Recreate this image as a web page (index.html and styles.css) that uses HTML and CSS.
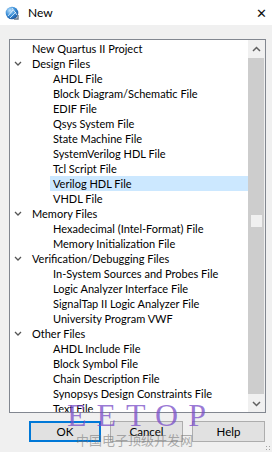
FILE: index.html
```html
<!DOCTYPE html>
<html lang="en">

<head>
    <meta charset="UTF-8">
    <meta name="viewport" content="width=device-width, initial-scale=1.0">
    <title>New</title>
    <link rel="stylesheet" href="styles.css">
</head>

<body>
    <div class="window">
        <div class="titlebar">
            <svg class="app-icon" width="14" height="14" viewBox="0 0 14 14">
                <defs>
                    <radialGradient id="globe" cx="0.35" cy="0.3" r="0.8">
                        <stop offset="0" stop-color="#bfe3ff"/>
                        <stop offset="0.5" stop-color="#3a8fd8"/>
                        <stop offset="1" stop-color="#1d4f94"/>
                    </radialGradient>
                </defs>
                <circle cx="7" cy="7" r="6.3" fill="url(#globe)"/>
                <path d="M3 10 L8 4 M5 12 L11 6 M7 2 L12 9" stroke="#ffffff" stroke-width="0.9" fill="none" opacity="0.8"/>
                <path d="M9 13 L13 13 L13 9" stroke="#6a7a8a" stroke-width="1.4" fill="none"/>
            </svg>
            <span class="title">New</span>
            <span class="close">&#x2715;</span>
        </div>

        <div class="content">
            <div class="listbox">
                <ul class="tree">
                    <li class="row">New Quartus II Project</li>
                    <li class="row group"><span class="chev"></span>Design Files</li>
                    <li class="row child">AHDL File</li>
                    <li class="row child">Block Diagram/Schematic File</li>
                    <li class="row child">EDIF File</li>
                    <li class="row child">Qsys System File</li>
                    <li class="row child">State Machine File</li>
                    <li class="row child">SystemVerilog HDL File</li>
                    <li class="row child">Tcl Script File</li>
                    <li class="row child selected"><span>Verilog HDL File</span></li>
                    <li class="row child">VHDL File</li>
                    <li class="row group"><span class="chev"></span>Memory Files</li>
                    <li class="row child">Hexadecimal (Intel-Format) File</li>
                    <li class="row child">Memory Initialization File</li>
                    <li class="row group"><span class="chev"></span>Verification/Debugging Files</li>
                    <li class="row child">In-System Sources and Probes File</li>
                    <li class="row child">Logic Analyzer Interface File</li>
                    <li class="row child">SignalTap II Logic Analyzer File</li>
                    <li class="row child">University Program VWF</li>
                    <li class="row group"><span class="chev"></span>Other Files</li>
                    <li class="row child">AHDL Include File</li>
                    <li class="row child">Block Symbol File</li>
                    <li class="row child">Chain Description File</li>
                    <li class="row child">Synopsys Design Constraints File</li>
                    <li class="row child">Text File</li>
                </ul>
                <div class="scrollbar">
                    <div class="arrow">
                        <svg width="9" height="6" viewBox="0 0 9 6"><path d="M1 5 L4.5 1.5 L8 5" stroke="#606060" stroke-width="1.5" fill="none"/></svg>
                    </div>
                    <div class="thumb"><div class="thumb-mark"></div></div>
                    <div class="arrow">
                        <svg width="9" height="6" viewBox="0 0 9 6"><path d="M1 1 L4.5 4.5 L8 1" stroke="#606060" stroke-width="1.5" fill="none"/></svg>
                    </div>
                </div>
            </div>

            <div class="buttons">
                <button class="btn default">OK</button>
                <button class="btn">Cancel</button>
                <button class="btn">Help</button>
            </div>
        </div>

        <div class="watermark">
            <div class="wm-logo">EETOP</div>
            <div class="wm-sub">中国电子顶级开发网</div>
        </div>
        <div class="grip"></div>
    </div>
</body>

</html>
```

FILE: styles.css
```css
body {
    margin: 0;
    padding: 0;
    font-family: Lato, "Noto Sans", sans-serif;
    font-size: 11px;
    color: #000;
    background: #f0f0f0;
}

.window {
    position: relative;
    width: 272px;
    height: 452px;
    overflow: hidden;
    background: #f0f0f0;
}

.titlebar {
    height: 25px;
    background: #fff;
    display: flex;
    align-items: center;
    padding-left: 5px;
}

.app-icon {
    margin-right: 9px;
}

.title {
    flex: 1;
    font-size: 12px;
}

.close {
    font-size: 13px;
    width: 12px;
    margin-right: 4px;
    color: #111;
}

.content {
    padding: 14px 6px 0 9px;
}

.listbox {
    height: 372px;
    border: 1px solid #828790;
    background: #fff;
    display: flex;
    overflow: hidden;
}

.tree {
    list-style: none;
    margin: 0;
    padding: 1px 0 0 0;
    flex: 1;
}

.row {
    height: 15px;
    line-height: 15px;
    padding-left: 22px;
    white-space: nowrap;
    display: flex;
    align-items: center;
}

.group {
    padding-left: 4px;
}

.chev {
    width: 8px;
    height: 8px;
    margin-right: 10px;
    background: url("data:image/svg+xml;utf8,<svg xmlns='http://www.w3.org/2000/svg' width='8' height='8'><path d='M1 2 L4 5 L7 2' stroke='%23555' stroke-width='1.3' fill='none'/></svg>") no-repeat center;
}

.child {
    padding-left: 43px;
}

.selected {
    padding-left: 40px;
}

.selected span {
    flex: 1;
    background: #cce8ff;
    padding-left: 3px;
}

.scrollbar {
    width: 17px;
    display: flex;
    flex-direction: column;
    background: #f0f0f0;
}

.arrow {
    height: 17px;
    display: flex;
    align-items: center;
    justify-content: center;
}

.thumb {
    flex: 1;
    background: #cdcdcd;
    margin: 1px 1px 1px 0;
    position: relative;
}

.thumb-mark {
    position: absolute;
    left: 3px;
    top: 157px;
    width: 11px;
    height: 12px;
    background: #f0f0f0;
}

.buttons {
    display: flex;
    justify-content: flex-end;
    gap: 9px;
    margin-top: 8px;
    padding-right: 1px;
}

.btn {
    width: 73px;
    height: 21px;
    font-family: Lato, "Noto Sans", sans-serif;
    font-size: 11.5px;
    background: #e1e1e1;
    border: 1px solid #adadad;
    padding: 0;
    color: #000;
}

.default {
    border: 2px solid #0078d7;
    width: 72px;
}

.watermark {
    position: absolute;
    left: 67px;
    top: 398px;
    pointer-events: none;
}

.wm-logo {
    font-family: "Liberation Serif", serif;
    font-size: 32px;
    letter-spacing: 10px;
    color: rgba(122, 78, 200, 0.75);
    line-height: 34px;
}

.wm-sub {
    font-family: "Noto Sans CJK SC", sans-serif;
    font-size: 13px;
    color: rgba(110, 110, 110, 0.55);
    margin-left: 9px;
    margin-top: 0;
    line-height: 15px;
}

.grip {
    position: absolute;
    right: 1px;
    bottom: 1px;
    width: 6px;
    height: 6px;
    background: radial-gradient(circle, #a0a0a0 0.8px, transparent 1px) 0 0 / 3px 3px;
}
```
